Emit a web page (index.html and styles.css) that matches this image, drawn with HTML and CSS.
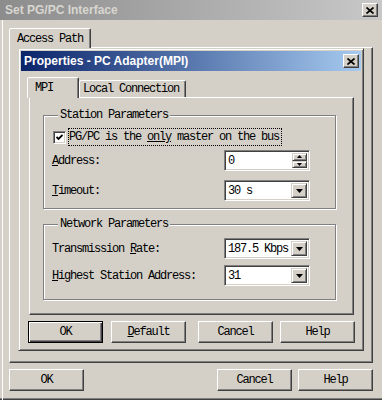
FILE: index.html
```html
<!DOCTYPE html>
<html>
<head>
<meta charset="utf-8">
<title>Set PG/PC Interface</title>
<link rel="stylesheet" href="styles.css">
</head>
<body>
<div class="window">
  <div class="titlebar inactive">
    <span class="title">Set PG/PC Interface</span>
    <span class="closebtn"><svg width="8" height="7" viewBox="0 0 8 7"><path d="M0.5 0.5 L7.5 6.5 M7.5 0.5 L0.5 6.5" stroke="#000" stroke-width="1.7" fill="none"/></svg></span>
  </div>
  <div class="frame">
    <div class="otabs"><div class="tab sel otab">Access Path</div></div>
    <div class="opanel">
      <div class="dlg">
        <div class="titlebar active">
          <span class="title">Properties - PC Adapter(MPI)</span>
          <span class="closebtn"><svg width="8" height="7" viewBox="0 0 8 7"><path d="M0.5 0.5 L7.5 6.5 M7.5 0.5 L0.5 6.5" stroke="#000" stroke-width="1.7" fill="none"/></svg></span>
        </div>
        <div class="itabs">
          <div class="tab sel mpi">MPI</div>
          <div class="tab lc">Local Connection</div>
        </div>
        <div class="ipanel">
          <fieldset class="group station">
            <legend>Station Parameters</legend>
            <div class="chkrow">
              <span class="chk"><svg width="7" height="7" viewBox="0 0 7 7"><polyline points="0.5,3 2.5,5 6.5,1" stroke="#000" stroke-width="1.8" fill="none"/></svg></span>
              <span class="focus">PG/PC is the <u>only</u> master on the bus</span>
            </div>
            <div class="row r-addr">
              <span class="lbl"><u>A</u>ddress:</span>
              <span class="field num">
                <span class="val">0</span>
                <span class="spin">
                  <span class="sb"><svg width="5" height="3" viewBox="0 0 5 3"><polygon points="2.5,0 5,3 0,3" fill="#000"/></svg></span>
                  <span class="sb"><svg width="5" height="3" viewBox="0 0 5 3"><polygon points="0,0 5,0 2.5,3" fill="#000"/></svg></span>
                </span>
              </span>
            </div>
            <div class="row r-time">
              <span class="lbl"><u>T</u>imeout:</span>
              <span class="field combo">
                <span class="val">30 s</span>
                <span class="drop"><svg width="7" height="4" viewBox="0 0 7 4"><polygon points="0,0 7,0 3.5,4" fill="#000"/></svg></span>
              </span>
            </div>
          </fieldset>
          <fieldset class="group network">
            <legend>Network Parameters</legend>
            <div class="row r-rate">
              <span class="lbl">Transmission <u>R</u>ate:</span>
              <span class="field combo">
                <span class="val">187.5 Kbps</span>
                <span class="drop"><svg width="7" height="4" viewBox="0 0 7 4"><polygon points="0,0 7,0 3.5,4" fill="#000"/></svg></span>
              </span>
            </div>
            <div class="row r-high">
              <span class="lbl"><u>H</u>ighest Station Address:</span>
              <span class="field combo">
                <span class="val">31</span>
                <span class="drop"><svg width="7" height="4" viewBox="0 0 7 4"><polygon points="0,0 7,0 3.5,4" fill="#000"/></svg></span>
              </span>
            </div>
          </fieldset>
        </div>
        <div class="btnrow inner">
          <button class="btn def">OK</button>
          <button class="btn b-default"><u>D</u>efault</button>
          <button class="btn b-cancel">Cancel</button>
          <button class="btn b-help">Help</button>
        </div>
      </div>
    </div>
    <div class="btnrow outer">
      <button class="btn">OK</button>
      <button class="btn o-cancel">Cancel</button>
      <button class="btn o-help">Help</button>
    </div>
  </div>
</div>
</body>
</html>
```

FILE: styles.css
```css
* { box-sizing: border-box; }
html, body { margin: 0; padding: 0; }
body {
  width: 382px;
  height: 400px;
  overflow: hidden;
  background: #d4d0c8;
  font-family: "Liberation Mono", "DejaVu Sans Mono", monospace;
  font-size: 12px;
  letter-spacing: -1.2px;
  color: #000;
}
u { text-underline-offset: 1px; }

.window {
  height: 400px;
  display: flex;
  flex-direction: column;
  box-shadow: inset 0 -1px #404040, inset 0 -2px #808080;
}

.titlebar {
  display: flex;
  align-items: center;
  height: 20px;
  flex: none;
  font-family: "Liberation Sans", Arial, sans-serif;
  font-weight: bold;
  font-size: 12px;
  letter-spacing: 0;
}
.titlebar.inactive {
  background: linear-gradient(to right, #8c8c8c, #c8c8c8);
  color: #d8d6d0;
  padding-left: 5px;
}
.titlebar.active {
  background: linear-gradient(to right, #0a246a, #a6caf0);
  color: #fff;
  padding-left: 3px;
}
.title { flex: 1; white-space: nowrap; }
.closebtn {
  width: 16px;
  height: 14px;
  flex: none;
  background: #d4d0c8;
  border: 1px solid;
  border-color: #fff #404040 #404040 #fff;
  box-shadow: inset -1px -1px #808080;
  display: flex;
  align-items: center;
  justify-content: center;
  margin-right: 4px;
}
.titlebar.active .closebtn { margin-right: 2px; }

.frame {
  flex: 1;
  margin-left: 2px;
  border-left: 1px solid #fff;
  padding-left: 6px;
  display: flex;
  flex-direction: column;
}

.tab {
  background: #d4d0c8;
  border: 1px solid;
  border-bottom: none;
  border-color: #fff #404040 transparent #fff;
  box-shadow: inset -1px 0 #808080;
  border-radius: 2px 2px 0 0;
  display: flex;
  align-items: center;
  white-space: nowrap;
}
.tab.sel { position: relative; z-index: 1; margin-bottom: -1px; }

.otabs { height: 27px; display: flex; align-items: flex-end; flex: none; }
.otab { width: 82px; height: 20px; padding-left: 7px; }

.opanel {
  width: 364px;
  height: 316px;
  flex: none;
  border: 1px solid;
  border-color: #fff #404040 #404040 #fff;
  box-shadow: inset -1px -1px #808080;
  padding-left: 8px;
}

.dlg {
  width: 346px;
  height: 303px;
  border: 1px solid;
  border-color: #d4d0c8 #404040 #404040 #d4d0c8;
  box-shadow: inset 1px 1px #fff, inset -1px -1px #808080;
  padding: 2px;
  display: flex;
  flex-direction: column;
}

.itabs { height: 26px; display: flex; align-items: flex-end; padding-left: 6px; flex: none; }
.mpi { width: 52px; height: 21px; padding-left: 7px; }
.lc { width: 107px; height: 17px; padding-left: 3px; }

.ipanel {
  margin-left: 8px;
  width: 325px;
  height: 218px;
  flex: none;
  border: 1px solid;
  border-color: #fff #404040 #404040 #fff;
  box-shadow: inset -1px -1px #808080;
  padding-left: 13px;
}

.group {
  margin: 0;
  min-width: 0;
  width: 293px;
  border: 1px solid #808080;
  box-shadow: 1px 1px 0 #fff, inset 1px 1px 0 #fff;
  padding: 0 0 0 8px;
}
.group legend {
  margin-left: 6px;
  padding: 0 2px;
  height: 12px;
  line-height: 12px;
  background: #d4d0c8;
}
.station { margin-top: 11px; padding-bottom: 7px; }
.network { margin-top: 9px; padding-bottom: 13px; }

.chkrow { display: flex; align-items: center; height: 18px; margin-top: 7px; }
.chk {
  width: 13px;
  height: 13px;
  flex: none;
  margin-left: 1px;
  border: 1px solid;
  border-color: #808080 #fff #fff #808080;
  box-shadow: inset 1px 1px #404040, inset -1px -1px #d4d0c8;
  background: #fff;
  display: flex;
  align-items: center;
  justify-content: center;
}
.focus {
  display: block;
  margin-left: 2px;
  height: 18px;
  line-height: 16px;
  border: 1px dotted #000;
  padding-right: 2px;
  white-space: pre;
}

.row {
  display: grid;
  grid-template-columns: 172px 86px;
  align-items: center;
  height: 21px;
}
.lbl { white-space: nowrap; }
.r-addr { margin-top: 4px; }
.r-time { margin-top: 9px; }
.r-rate { margin-top: 8px; }
.r-high { margin-top: 6px; }

.field {
  display: flex;
  height: 21px;
  border: 1px solid;
  border-color: #808080 #fff #fff #808080;
  box-shadow: inset 1px 1px #404040, inset -1px -1px #d4d0c8;
  background: #fff;
  padding: 2px;
}
.val { flex: 1; display: flex; align-items: center; padding-left: 1px; white-space: pre; }

.drop {
  width: 16px;
  flex: none;
  background: #d4d0c8;
  border: 1px solid;
  border-color: #d4d0c8 #404040 #404040 #d4d0c8;
  box-shadow: inset 1px 1px #fff, inset -1px -1px #808080;
  display: flex;
  align-items: center;
  justify-content: center;
}

.spin { width: 15px; flex: none; display: flex; flex-direction: column; }
.sb {
  flex: 1;
  background: #d4d0c8;
  border: 1px solid;
  border-color: #d4d0c8 #404040 #404040 #d4d0c8;
  box-shadow: inset 1px 1px #fff, inset -1px -1px #808080;
  display: flex;
  align-items: center;
  justify-content: center;
}

.btnrow { display: flex; flex: none; }
.btnrow.inner { margin-top: 6px; padding-left: 7px; }
.btnrow.outer { margin-top: 6px; }

.btn {
  font: inherit;
  letter-spacing: inherit;
  color: #000;
  width: 75px;
  height: 22px;
  padding: 0;
  background: #d4d0c8;
  border: 1px solid;
  border-color: #fff #404040 #404040 #fff;
  box-shadow: inset -1px -1px #808080;
  border-radius: 0;
}
.btn.def {
  border-color: #000;
  box-shadow: inset 1px 1px #fff, inset -1px -1px #404040, inset -2px -2px #808080;
}
.b-default { margin-left: 8px; }
.b-cancel { margin-left: 12px; }
.b-help { margin-left: 7px; }
.o-cancel { margin-left: 133px; }
.o-help { margin-left: 6px; }
```
